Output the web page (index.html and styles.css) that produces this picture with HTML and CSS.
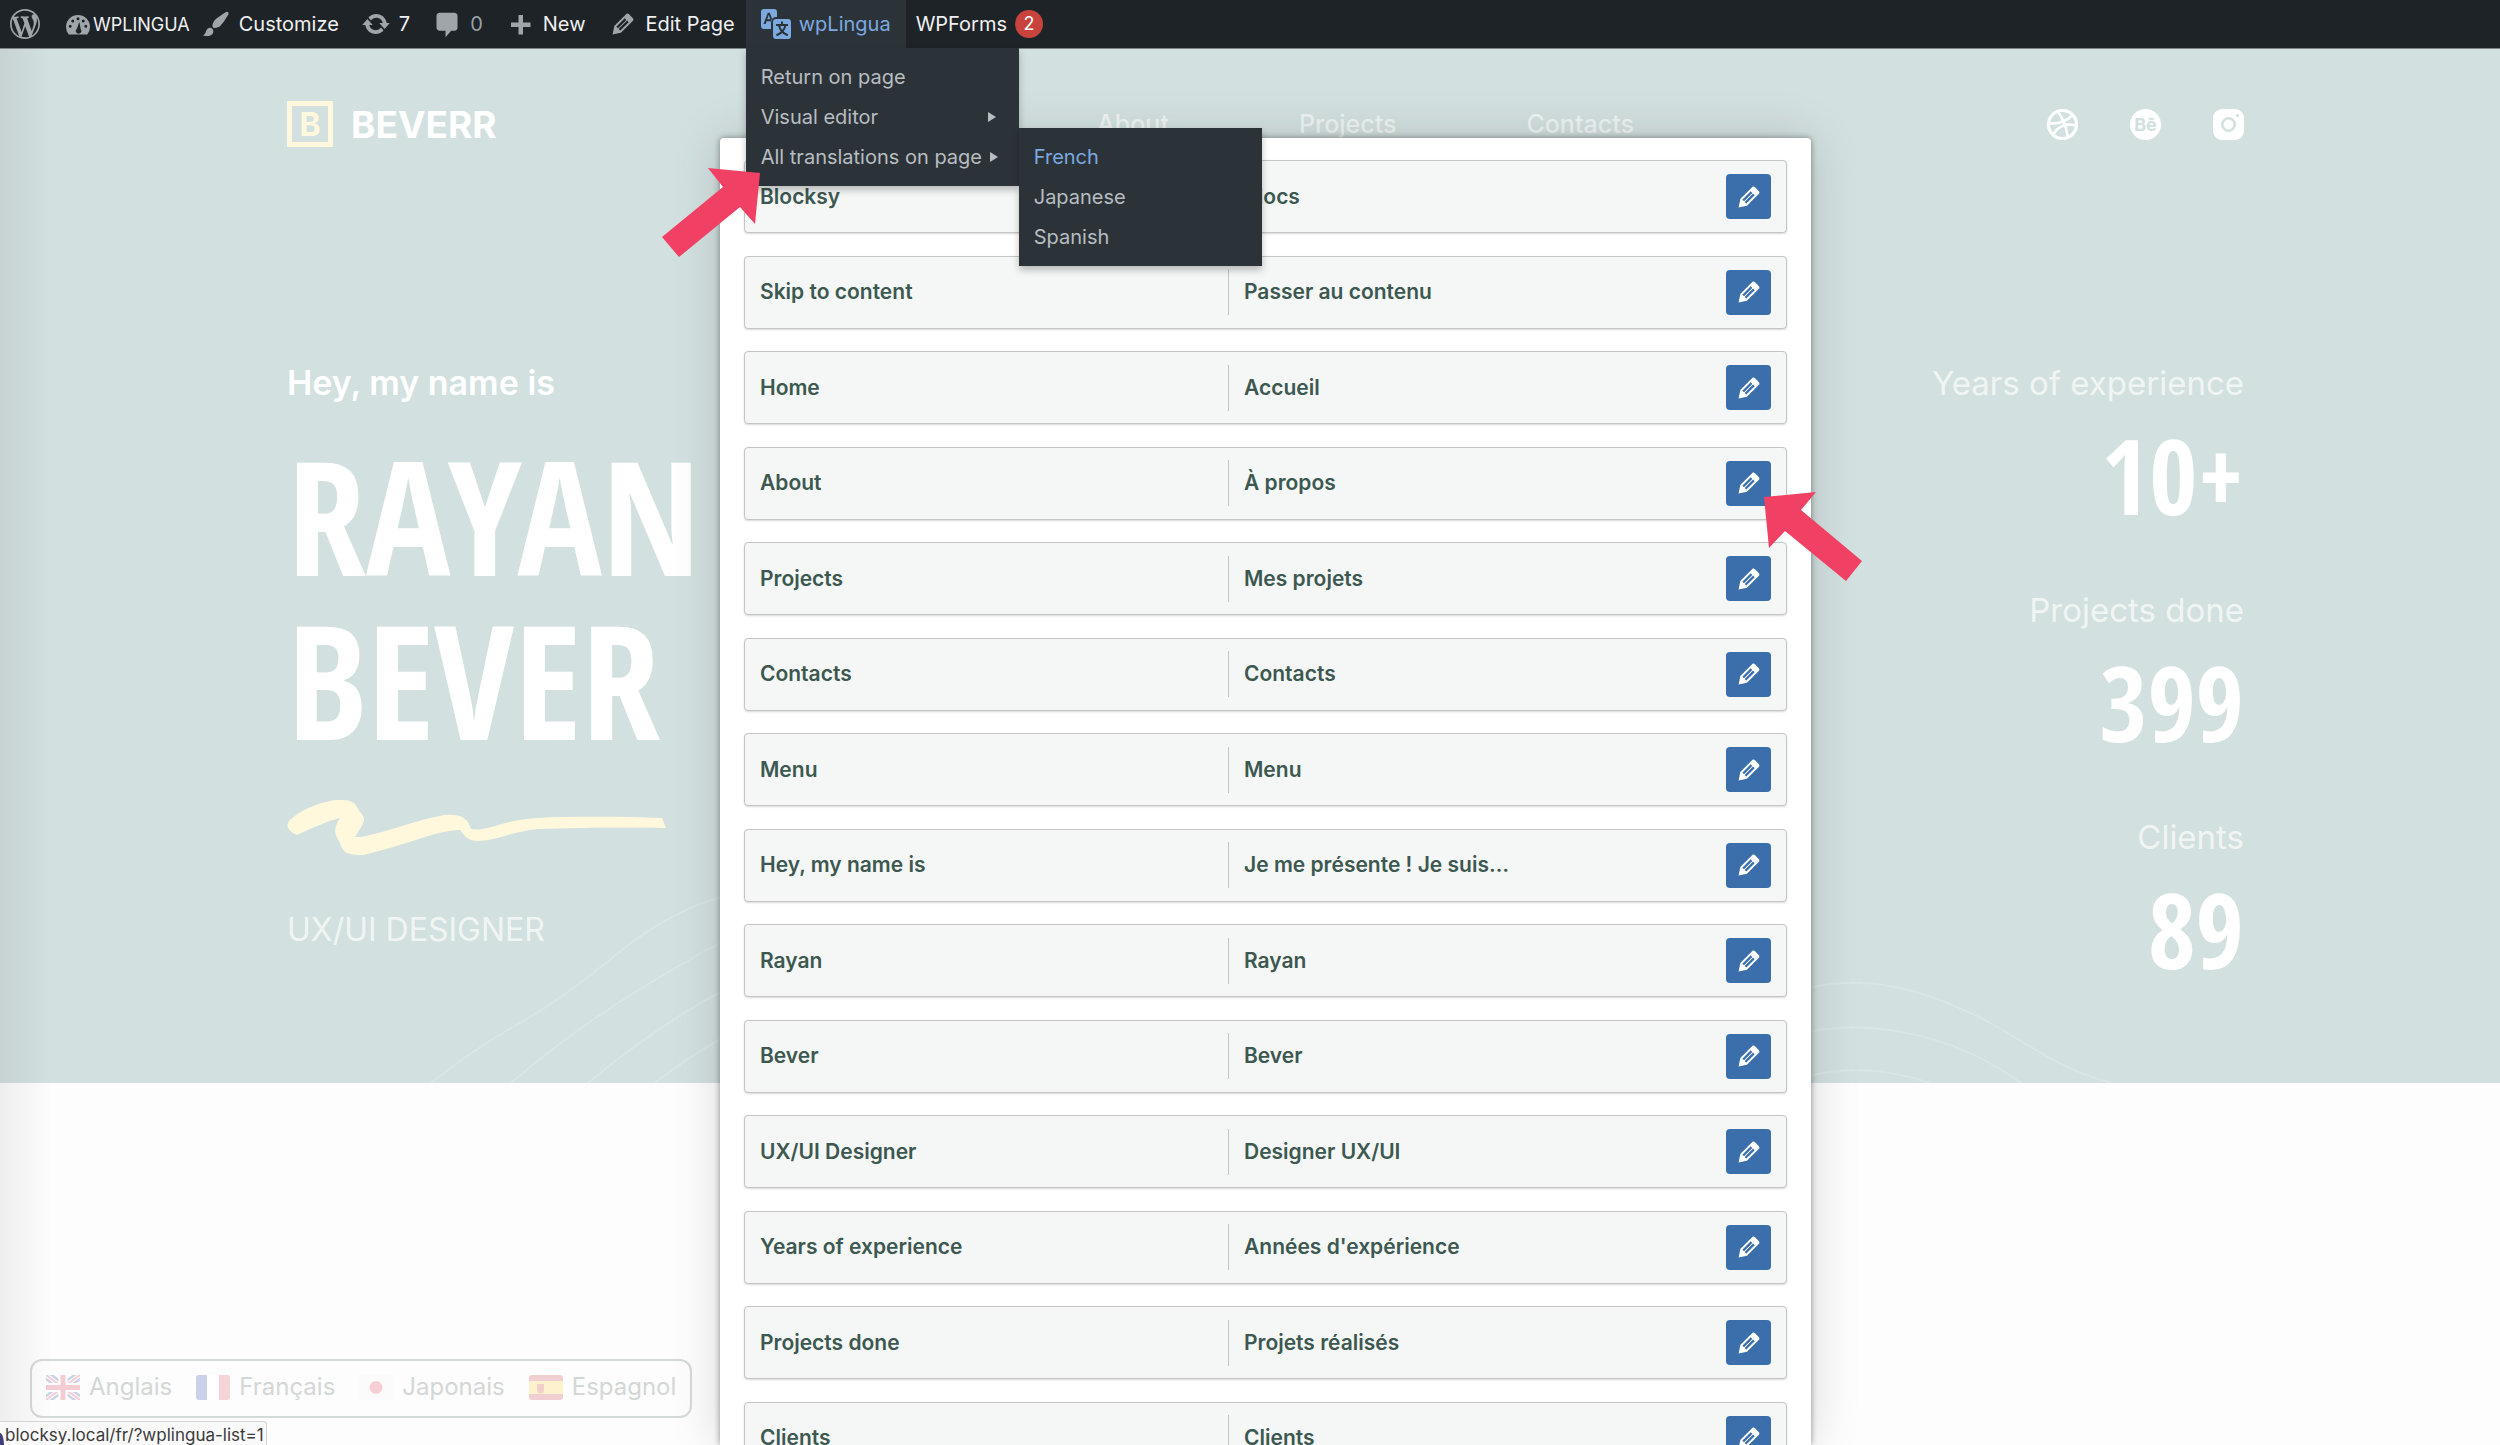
FILE: index.html
```html
<!DOCTYPE html>
<html lang="en">
<head>
<meta charset="utf-8">
<title>Beverr – All translations on page</title>
<link rel="stylesheet" href="styles.css">
</head>
<body>
<svg class="sprite" aria-hidden="true">
  <symbol id="i-edit" viewBox="0 0 20 20"><path d="M13.89 3.39l2.71 2.72c.46.46.42 1.24.03 1.64l-8.01 8.02-5.56 1.16 1.16-5.58s7.6-7.63 7.99-8.03c.39-.39 1.22-.39 1.68.07zm-2.73 2.79l-5.59 5.61 1.11 1.11 5.54-5.65zm-2.97 8.23l5.58-5.6-1.07-1.08-5.59 5.6z"/></symbol>
</svg>

<header class="adminbar">
  <a class="item item-wp" href="#" aria-label="WordPress"><svg class="icon" viewBox="0 0 20 20"><path d="M20 10c0-5.51-4.49-10-10-10C4.48 0 0 4.49 0 10c0 5.52 4.48 10 10 10 5.51 0 10-4.48 10-10zM7.78 15.37L4.37 6.22c.55-.02 1.17-.08 1.17-.08.5-.06.44-1.13-.06-1.11 0 0-1.45.11-2.37.11-.18 0-.37 0-.58-.01C4.12 2.69 6.87 1.11 10 1.11c2.33 0 4.45.87 6.05 2.34-.68-.11-1.65.39-1.65 1.58 0 .74.45 1.36.9 2.1.35.61.55 1.36.55 2.46 0 1.49-1.4 5-1.4 5l-3.03-8.37c.54-.02.82-.17.82-.17.5-.05.44-1.25-.06-1.22 0 0-1.44.12-2.38.12-.87 0-2.33-.12-2.33-.12-.5-.03-.56 1.2-.06 1.22l.92.08 1.26 3.41zM17.41 10c.24-.64.74-1.87.43-4.25.7 1.29 1.05 2.71 1.05 4.25 0 3.29-1.73 6.24-4.4 7.78.97-2.59 1.94-5.2 2.92-7.78zM6.1 18.09C3.12 16.65 1.11 13.53 1.11 10c0-1.3.23-2.48.72-3.59C3.25 10.3 4.67 14.2 6.1 18.09zm4.03-6.63l2.58 6.98c-.86.29-1.76.45-2.71.45-.79 0-1.57-.11-2.29-.33.81-2.38 1.62-4.74 2.42-7.1z"/></svg></a>
  <a class="item item-site" href="#"><svg class="icon" viewBox="0 0 20 20"><path fill-rule="evenodd" d="M3.8 17h12.4A8 8 0 1 0 3.8 17zM9 6.500a1 1 0 1 0 2 0a1 1 0 1 0-2 0zM5.500 8a1 1 0 1 0 2 0a1 1 0 1 0-2 0zM12.500 8a1 1 0 1 0 2 0a1 1 0 1 0-2 0zM3.800 11.500a1 1 0 1 0 2 0a1 1 0 1 0-2 0zM14.200 11.500a1 1 0 1 0 2 0a1 1 0 1 0-2 0zM10.900 8.500l.9 5a1.800 1.800 0 1 1-2.600-.2z"/></svg>WPLINGUA</a>
  <a class="item" href="#"><svg class="icon" viewBox="0 0 20 20"><path d="M18.33 3.57s.27-.8-.31-1.36c-.53-.52-1.22-.24-1.22-.24-.61.3-5.76 3.47-7.67 5.57-.86.96-2.06 3.79-1.09 4.82.92.98 3.96-.17 4.79-1 2.06-2.06 5.21-7.17 5.5-7.79zM1.4 17.65c2.37-1.56 1.46-3.41 3.23-4.64.93-.65 2.22-.62 3.08.29.63.67.8 2.57-.16 3.46-1.57 1.45-4 1.55-6.15.89z"/></svg>Customize</a>
  <a class="item" href="#"><svg class="icon" viewBox="0 0 20 20"><path d="M10.2 3.28c3.53 0 6.43 2.61 6.92 6h2.08l-3.5 4-3.5-4h2.32c-.45-1.97-2.21-3.45-4.32-3.45-1.45 0-2.73.71-3.54 1.78L4.95 5.66C6.23 4.2 8.11 3.28 10.2 3.28zm-.4 13.44c-3.52 0-6.43-2.61-6.92-6H.8l3.5-4c1.17 1.33 2.33 2.67 3.5 4H5.48c.45 1.97 2.21 3.45 4.32 3.45 1.45 0 2.73-.71 3.54-1.78l1.71 1.95c-1.28 1.46-3.15 2.38-5.25 2.38z"/></svg>7</a>
  <a class="item item-muted" href="#"><svg class="icon" viewBox="0 0 20 20"><path d="M5 2.500h10c1.100 0 2 .9 2 2v8c0 1.100-.9 2-2 2h-2.200L9 18.800v-4.300H5c-1.100 0-2-.9-2-2v-8c0-1.100.9-2 2-2z"/></svg>0</a>
  <a class="item" href="#"><svg class="icon" viewBox="0 0 20 20"><path d="M17 9v3h-5v5H9v-5H4V9h5V4h3v5h5z"/></svg>New</a>
  <a class="item" href="#"><svg class="icon"><use href="#i-edit"/></svg>Edit Page</a>
  <div class="item-open">
    <a class="item item-lingua" href="#"><svg class="icon" viewBox="0 0 30 30"><path fill-rule="evenodd" d="M3 0h10a3 3 0 0 1 3 3v5h-1a5 5 0 0 0-5 5v7H3a3 3 0 0 1-3-3V3a3 3 0 0 1 3-3zM2.500 15h2.200l.9-2.800h4l.4 1.300 1.200-3L8.900 3.800H6.800zM6.300 10.200l1.500-4.400 1.400 4.400z"/><path fill-rule="evenodd" d="M15 10h12a3 3 0 0 1 3 3v14a3 3 0 0 1-3 3H15a3 3 0 0 1-3-3V13a3 3 0 0 1 3-3zM20 12.500v2.500h-5v2h2.200c.6 2.400 1.500 4.100 2.600 5.500-1.300 1.200-2.900 2.100-4.800 2.800l.9 1.900c2.100-.8 3.900-1.800 5.300-3.200 1.400 1.400 3.200 2.400 5.200 3.200l.9-1.900c-1.900-.7-3.400-1.600-4.700-2.800 1.200-1.500 2-3.200 2.600-5.500H27v-2h-5v-2.500zM19.300 17h3.900c-.4 1.600-1 2.900-2 4-.9-1.100-1.500-2.400-1.900-4z"/></svg>wpLingua</a>
    <ul class="menu">
      <li><a href="#">Return on page</a></li>
      <li><a href="#">Visual editor<i class="caret"></i></a></li>
      <li class="has-sub"><a href="#">All translations on page<i class="caret"></i></a>
        <ul class="menu submenu">
          <li><a class="current" href="#">French</a></li>
          <li><a href="#">Japanese</a></li>
          <li><a href="#">Spanish</a></li>
        </ul>
      </li>
    </ul>
  </div>
  <a class="item item-forms" href="#">WPForms<span class="count">2</span></a>
</header>

<main class="page">
  <section class="hero">
    <svg class="waves" viewBox="0 0 2500 200" preserveAspectRatio="xMidYMax slice" aria-hidden="true">
      <path d="M431 200Q475 165 518 141T617 71T730 12Q900-60 1000-40M511 200Q575 145 650 100T730 57Q850 0 950 0M588 200Q660 140 730 104Q800 70 900 60M655 200Q700 165 730 152Q800 120 900 110M722 200Q760 175 800 160"/>
      <path d="M1780 112Q1812 104 1812 104C1870 92 1920 105 1985 137C2040 168 2060 186 2111 200M1812 148C1880 136 1960 155 2021 200M1812 192C1850 184 1890 186 1930 200"/>
    </svg>
    <div class="topnav">
      <a class="logo" href="#"><span class="logo-mark">B</span>BEVERR</a>
      <nav class="nav"><a href="#">About</a><a href="#">Projects</a><a href="#">Contacts</a></nav>
      <div class="social">
        <a href="#" aria-label="Dribbble"><svg viewBox="0 0 31 31"><g fill="none" stroke="#fff" stroke-width="2.600"><circle cx="15.500" cy="15.500" r="14" stroke-width="3.200"/><path d="M11 3C16 9 19 18 21 28M2 14.500C11 15 19 13 25.500 6M6 25.500C11 17 19 14 29.500 16.500"/></g></svg></a>
        <a class="behance" href="#" aria-label="Behance">Bē</a>
        <a href="#" aria-label="Instagram"><svg viewBox="0 0 31 31"><rect width="31" height="31" rx="9" fill="#fff"/><circle cx="15.500" cy="15.500" r="6.200" fill="none" stroke="#d2e0df" stroke-width="2.600"/><circle cx="24.300" cy="6.500" r="1.500" fill="#d2e0df"/></svg></a>
      </div>
    </div>
    <div class="intro">
      <div class="who">
        <p class="hello">Hey, my name is</p>
        <h1 class="name">RAYAN<br>BEVER</h1>
        <svg class="scribble" viewBox="0 0 380 55" aria-hidden="true"><path d="M10 35C1 31-3 25 4 19C18 7 38 1 50 0C62 0 68 0 72 11C80 19 78 21 68 37L74 37C100 32 130 20 157 15C172 14 180 16 184 29C200 32 215 20 250 18C300 16 340 17 375 18L379 28C330 27 290 28 250 29C225 32 210 40 192 41C180 41 178 36 173 30C150 30 120 45 76 55C60 55 56 53 53 43C47 34 46 29 53 18C38 22 30 26 10 35Z"/></svg>
        <p class="role">UX/UI DESIGNER</p>
      </div>
      <dl class="stats">
        <div><dt>Years of experience</dt><dd>10+</dd></div>
        <div><dt>Projects done</dt><dd>399</dd></div>
        <div><dt>Clients</dt><dd>89</dd></div>
      </dl>
    </div>
  </section>
</main>

<nav class="languages" aria-label="Languages">
  <a href="#"><svg class="flag" viewBox="0 0 34 25"><rect width="34" height="25" rx="3" fill="#fff"/><path d="M0 0L34 25M34 0L0 25" stroke="#cdd2e8" stroke-width="9"/><path d="M0 0L34 25M34 0L0 25" stroke="#fff" stroke-width="4"/><path d="M0 0L34 25M34 0L0 25" stroke="#f3cfd4" stroke-width="2"/><path d="M17 0V25M0 12.500H34" stroke="#fff" stroke-width="9"/><path d="M17 0V25M0 12.500H34" stroke="#f3cdd1" stroke-width="5"/></svg>Anglais</a>
  <a href="#"><svg class="flag" viewBox="0 0 34 25"><rect width="34" height="25" rx="3" fill="#fff"/><path d="M3 0H11V25H3a3 3 0 0 1-3-3V3a3 3 0 0 1 3-3z" fill="#cbd1e8"/><path d="M23 0h8a3 3 0 0 1 3 3v19a3 3 0 0 1-3 3h-8z" fill="#f5d3d7"/></svg>Français</a>
  <a href="#"><svg class="flag" viewBox="0 0 34 25"><rect width="34" height="25" rx="3" fill="#fbfbfb"/><circle cx="17" cy="12.500" r="6.500" fill="#f6ced6"/></svg>Japonais</a>
  <a href="#"><svg class="flag" viewBox="0 0 34 25"><rect width="34" height="25" rx="3" fill="#f0ced2"/><rect y="6" width="34" height="13" fill="#fdf2cd"/><path d="M8 9h7v6a3 3 0 0 1-7 0z" fill="#f3cfc9"/></svg>Espagnol</a>
</nav>

<section class="panel" aria-label="All translations on page">
  <ul class="rows">
    <li><span>Blocksy</span><span>Blocs</span><button aria-label="Edit"><svg class="icon"><use href="#i-edit"/></svg></button></li>
    <li><span>Skip to content</span><span>Passer au contenu</span><button aria-label="Edit"><svg class="icon"><use href="#i-edit"/></svg></button></li>
    <li><span>Home</span><span>Accueil</span><button aria-label="Edit"><svg class="icon"><use href="#i-edit"/></svg></button></li>
    <li><span>About</span><span>À propos</span><button aria-label="Edit"><svg class="icon"><use href="#i-edit"/></svg></button></li>
    <li><span>Projects</span><span>Mes projets</span><button aria-label="Edit"><svg class="icon"><use href="#i-edit"/></svg></button></li>
    <li><span>Contacts</span><span>Contacts</span><button aria-label="Edit"><svg class="icon"><use href="#i-edit"/></svg></button></li>
    <li><span>Menu</span><span>Menu</span><button aria-label="Edit"><svg class="icon"><use href="#i-edit"/></svg></button></li>
    <li><span>Hey, my name is</span><span>Je me présente ! Je suis…</span><button aria-label="Edit"><svg class="icon"><use href="#i-edit"/></svg></button></li>
    <li><span>Rayan</span><span>Rayan</span><button aria-label="Edit"><svg class="icon"><use href="#i-edit"/></svg></button></li>
    <li><span>Bever</span><span>Bever</span><button aria-label="Edit"><svg class="icon"><use href="#i-edit"/></svg></button></li>
    <li><span>UX/UI Designer</span><span>Designer UX/UI</span><button aria-label="Edit"><svg class="icon"><use href="#i-edit"/></svg></button></li>
    <li><span>Years of experience</span><span>Années d'expérience</span><button aria-label="Edit"><svg class="icon"><use href="#i-edit"/></svg></button></li>
    <li><span>Projects done</span><span>Projets réalisés</span><button aria-label="Edit"><svg class="icon"><use href="#i-edit"/></svg></button></li>
    <li><span>Clients</span><span>Clients</span><button aria-label="Edit"><svg class="icon"><use href="#i-edit"/></svg></button></li>
  </ul>
</section>

<svg class="pointer pointer-menu" viewBox="0 0 98 89" aria-hidden="true"><path d="M46 0L98 5L93 56L78 39L17 89L0 69L61 19Z"/></svg>
<svg class="pointer pointer-edit" viewBox="0 0 98 89" aria-hidden="true"><path d="M0 5L52 0L37 18L98 69L82 89L21 39L5 56Z"/></svg>

<div class="status">blocksy.local/fr/?wplingua-list=1</div>
</body>
</html>
```
FILE: styles.css
```css
* { box-sizing: border-box; }
html, body { height: 100%; }
body {
  margin: 0;
  overflow: hidden;
  position: relative;
  background: #fdfdfd;
  font-family: Inter, "Liberation Sans", sans-serif;
}
a { color: inherit; text-decoration: none; }
ul, dl, dd, p, h1 { margin: 0; padding: 0; }
ul { list-style: none; }
.sprite { display: none; }
.icon { width: 30px; height: 30px; fill: currentColor; flex: none; }

/* Admin bar */
.adminbar {
  position: relative;
  z-index: 3;
  display: flex;
  height: 49px;
  background: #1d2327;
  border-bottom: 1px solid #7c8486;
  color: #f0f0f1;
  font-size: 20px;
}
.item { display: flex; align-items: center; gap: 8px; height: 48px; padding: 0 11px; }
.item > .icon { color: #a0a5aa; }
.item-wp { padding: 0 10px; }
.item-site { gap: 0; padding: 0 0 0 13px; font-size: 18px; }
.item-muted { color: #9ba0a5; }
.item-open { position: relative; background: #2c3338; color: #7ba9e0; }
.item-lingua { padding: 0 15px; }
.item-lingua > .icon { color: #7ba9e0; }
.item-forms { gap: 8px; padding: 0 10px; }
.count {
  width: 28px;
  height: 28px;
  border-radius: 50%;
  background: #c9433d;
  color: #fff;
  font-size: 18px;
  line-height: 28px;
  text-align: center;
}
.menu {
  position: absolute;
  top: 48px;
  left: 0;
  width: 273px;
  padding: 9px 0;
  background: #2c3338;
  color: #b8bdc1;
  box-shadow: 0 4px 7px rgba(0, 0, 0, .25);
}
.menu a { display: flex; align-items: center; gap: 8px; height: 40px; padding: 0 15px; white-space: nowrap; }
.menu .current { color: #7ba9e0; }
.has-sub { position: relative; }
.submenu { top: -9px; left: 100%; width: 243px; }
.caret { margin: 0 8px 0 auto; border: solid transparent; border-width: 5px 0 5px 8px; border-left-color: #b8bdc1; }

/* Site page */
.page::before {
  content: "";
  position: absolute;
  z-index: 1;
  inset: 0 auto 0 0;
  width: 52px;
  background: linear-gradient(90deg, rgba(0, 0, 0, .06), transparent);
}
.hero { position: relative; padding: 52px 256px 109px 287px; background: #d2e0df; color: #fff; }
.waves { position: absolute; left: 0; bottom: 0; width: 100%; height: 200px; fill: none; stroke: #d9e6e5; stroke-width: 2; }
.topnav { display: grid; grid-template-columns: 1fr auto 1fr; align-items: center; height: 46px; }
.logo { display: flex; align-items: center; gap: 18px; font-size: 37px; font-weight: 700; }
.logo-mark {
  width: 46px;
  height: 46px;
  border: 5px solid #fff8dd;
  color: #fff8dd;
  font-size: 32px;
  line-height: 37px;
  text-align: center;
}
.nav { display: flex; gap: 130px; padding-left: 200px; color: #eef4f3; font-size: 25px; font-weight: 500; }
.social { display: flex; justify-content: flex-end; gap: 52px; }
.social a, .social svg { display: block; width: 31px; height: 31px; }
.social .behance { border-radius: 50%; background: #fff; color: #d2e0df; font-size: 18px; font-weight: 700; line-height: 31px; text-align: center; }
.intro { display: flex; justify-content: space-between; margin-top: 213px; }
.hello { font-size: 34px; font-weight: 600; line-height: 46px; }
.name, .stats dd { font-family: "Open Sans Condensed", "Liberation Sans Narrow", sans-serif; font-weight: 700; }
.name { margin: 27px 0 39px; font-size: 158px; line-height: 164px; }
.scribble { display: block; width: 380px; height: 55px; fill: #fff8dd; }
.role { margin-top: 52px; color: #f0f5f4; font-size: 32px; line-height: 46px; }
.stats { display: flex; flex-direction: column; gap: 67px; text-align: right; }
.stats dt { margin-bottom: 24px; color: #f0f5f4; font-size: 33px; line-height: 46px; }
.stats dd { font-size: 104px; line-height: 90px; }

/* Language switcher */
.languages {
  position: absolute;
  left: 30px;
  bottom: 27px;
  display: flex;
  gap: 24px;
  padding: 0 14px 3px;
  border: 2px solid #d5d9d8;
  border-radius: 12px;
  color: #d3d7d6;
  font-size: 24px;
  line-height: 52px;
}
.languages a { display: flex; align-items: center; gap: 9px; }
.flag { width: 34px; height: 25px; }

/* Translation list */
.panel {
  position: absolute;
  z-index: 2;
  top: 138px;
  left: 720px;
  right: 689px;
  bottom: 0;
  overflow: hidden;
  padding: 22px 24px 0;
  border-radius: 4px 4px 0 0;
  background: #fff;
  box-shadow: 0 0 6px rgba(0, 0, 0, .4), 0 0 50px rgba(0, 0, 0, .15);
}
.rows { display: grid; gap: 0.9vw; }
.rows li {
  display: grid;
  grid-template-columns: 1fr 1fr 75px;
  align-items: center;
  height: 73px;
  border: 1px solid #c3c6c5;
  border-radius: 4px;
  background: #f5f7f6;
  box-shadow: 0 1px 2px rgba(0, 0, 0, .15);
  color: #3c5850;
  font-size: 21px;
  font-weight: 600;
}
.rows span { padding-left: 15px; line-height: 46px; }
.rows span + span { border-left: 1px solid #c3c6c5; }
.rows button {
  display: grid;
  place-items: center;
  justify-self: center;
  width: 45px;
  height: 45px;
  padding: 0;
  border: 0;
  border-radius: 4px;
  background: #3a6fac;
  color: #fff;
}

/* Callout arrows */
.pointer { position: absolute; z-index: 4; width: 98px; height: 89px; fill: #f04063; }
.pointer-menu { top: 168px; left: 662px; }
.pointer-edit { top: 492px; left: 1764px; }

/* Browser link preview */
.status {
  position: absolute;
  z-index: 4;
  left: 0;
  bottom: 0;
  padding: 4px 2px 0 5px;
  border: 1px solid #d4d4d4;
  border-width: 1px 1px 0 0;
  border-radius: 0 4px 0 0;
  background: #f9f9f9;
  color: #3b3b3b;
  font-size: 17px;
  line-height: 19px;
}
.status::before {
  content: "";
  position: absolute;
  left: 0;
  bottom: 0;
  width: 4px;
  height: 12px;
  border-top-right-radius: 4px 12px;
  background: #41417e;
}
```
